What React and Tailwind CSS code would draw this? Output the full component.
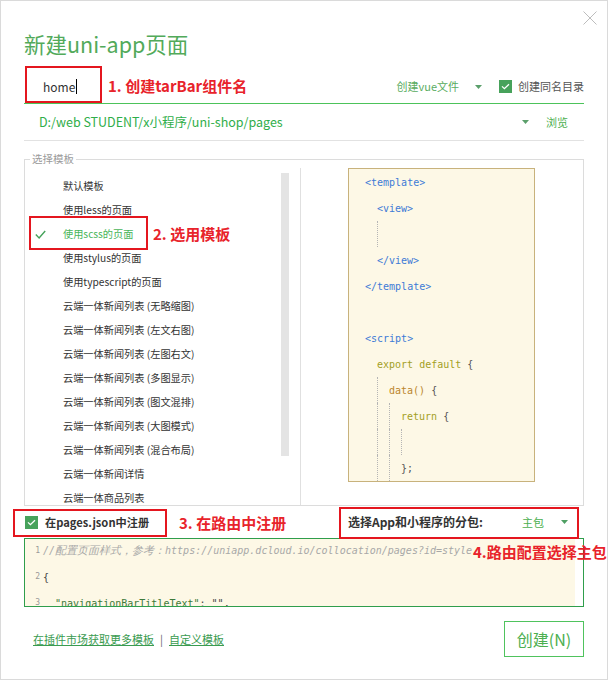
import React from "react";

const Arrow = ({ className = "" }) => (
  <svg width="7" height="4" viewBox="0 0 7 4" className={className}>
    <path d="M0 0h7L3.5 4z" fill="currentColor" />
  </svg>
);

const CheckBox = () => (
  <span className="flex h-[13px] w-[13px] items-center justify-center bg-[#47a25b]">
    <svg width="9" height="7" viewBox="0 0 9 7">
      <path d="M1 3.4l2.4 2.3L8 1.2" stroke="white" strokeWidth="1.3" fill="none" />
    </svg>
  </span>
);

const items = [
  "默认模板",
  "使用less的页面",
  "使用scss的页面",
  "使用stylus的页面",
  "使用typescript的页面",
  "云端一体新闻列表 (无略缩图)",
  "云端一体新闻列表 (左文右图)",
  "云端一体新闻列表 (左图右文)",
  "云端一体新闻列表 (多图显示)",
  "云端一体新闻列表 (图文混排)",
  "云端一体新闻列表 (大图模式)",
  "云端一体新闻列表 (混合布局)",
  "云端一体新闻详情",
  "云端一体商品列表",
];

const T = "text-[#3d7bd6]";
const O = "text-[#a39f1f]";
const B = "text-[#bb862c]";
const D = "text-[#555]";
const codeLines = [
  { cells: [], parts: [["<template>", T]] },
  { cells: [false], parts: [["<view>", T]] },
  { cells: [false, true], parts: [] },
  { cells: [false], parts: [["</view>", T]] },
  { cells: [], parts: [["</template>", T]] },
  { cells: [], parts: [] },
  { cells: [], parts: [["<script>", T]] },
  { cells: [false], parts: [["export default ", O], ["{", D]] },
  { cells: [false, true], parts: [["data() ", B], ["{", D]] },
  { cells: [false, true, true], parts: [["return ", O], ["{", D]] },
  { cells: [false, true, true, true], parts: [] },
  { cells: [false, true, true], parts: [["};", D]] },
  { cells: [false, true, true], parts: [] },
];

export default function App() {
  return (
    <div className="relative h-[680px] w-[608px] overflow-hidden border border-[#dadada] bg-white px-[23px] font-['Noto_Sans_CJK_SC',sans-serif]">
      {/* close */}
      <svg className="absolute right-[10px] top-[10px]" width="14" height="14" viewBox="0 0 14 14">
        <path d="M0.5 0.5L13.5 13.5M13.5 0.5L0.5 13.5" stroke="#bdbdbd" strokeWidth="1" />
      </svg>

      {/* title */}
      <div className="pt-[28px] text-[21.5px] leading-[30px] text-[#52aa5a]">新建uni-app页面</div>

      {/* name row */}
      <div className="mt-[11px] flex h-[34px] items-center border-b border-[#4cc35a]">
        <span className="pl-[19px] text-[12px] text-[#333]">home</span>
        <span className="ml-[1px] h-[15px] w-[1px] bg-black" />
        <div className="ml-auto flex items-center">
          <span className="text-[11px] text-[#5aac5f]">创建vue文件</span>
          <Arrow className="ml-[16px] text-[#5b9f6b]" />
          <span className="ml-[17px]">
            <CheckBox />
          </span>
          <span className="ml-[6px] text-[11px] text-[#555]">创建同名目录</span>
        </div>
      </div>

      {/* path row */}
      <div className="flex h-[37px] items-center border-b border-[#e2e2e2]">
        <span className="pl-[15px] text-[12.5px] text-[#2fae4a]">D:/web STUDENT/x小程序/uni-shop/pages</span>
        <Arrow className="ml-auto text-[#5b9f6b]" />
        <span className="ml-[17px] mr-[16px] text-[11px] text-[#4caf50]">浏览</span>
      </div>

      {/* template fieldset */}
      <fieldset className="mt-[12px] border border-[#dcdcdc]">
        <legend className="ml-[5px] px-[2px] text-[10.5px] leading-[12px] text-[#9a9a9a]">选择模板</legend>
        <div className="flex h-[340px]">
          <div className="flex w-[275px]">
            <div className="flex-1 overflow-hidden pt-[9px]">
              {items.map((t, i) => (
                <div key={i} className="flex h-[24px] items-center">
                  <span className="flex w-[38px] pl-[10px]">
                    {i === 2 && (
                      <svg width="11" height="9" viewBox="0 0 11 9">
                        <path d="M0.8 4.6l3.3 3.3L10.2 1" stroke="#45a25a" strokeWidth="1.4" fill="none" />
                      </svg>
                    )}
                  </span>
                  <span className={`whitespace-nowrap text-[10.2px] ${i === 2 ? "text-[#49b55a]" : "text-[#333]"}`}>{t}</span>
                </div>
              ))}
            </div>
            <div className="mt-[8px] h-[283px] w-[8px] bg-[#e4e4e4]" />
            <div className="w-[11px]" />
          </div>
          <div className="mt-[3px] flex-1 border-l border-[#e0e0e0]">
            <div className="ml-[47px] h-[314px] w-[187px] overflow-hidden border border-[#c8b27c] bg-[#fdf8e6] pl-[16px] font-['DejaVu_Sans_Mono',monospace] text-[10px]">
              {codeLines.map((l, i) => (
                <div key={i} className="flex h-[26px] items-center whitespace-pre">
                  {l.cells.map((g, j) => (
                    <span key={j} className={`h-[26px] w-[12px] shrink-0 ${g ? "border-l border-dotted border-[#b5b5b5]" : ""}`} />
                  ))}
                  {l.parts.map(([s, c], k) => (
                    <span key={k} className={c}>{s}</span>
                  ))}
                </div>
              ))}
            </div>
          </div>
        </div>
      </fieldset>

      {/* register row */}
      <div className="flex h-[32px] items-center">
        <span className="ml-[1px]">
          <CheckBox />
        </span>
        <span className="ml-[7px] text-[11.2px] font-semibold text-[#333]">在pages.json中注册</span>
        <span className="ml-auto text-[12px] font-semibold text-[#333]">选择App和小程序的分包:</span>
        <span className="ml-[39px] text-[11px] text-[#4caf50]">主包</span>
        <Arrow className="ml-[17px] mr-[16px] text-[#4f9f63]" />
      </div>

      {/* pages.json code */}
      <div className="flex h-[69px] overflow-hidden border border-[#2f9e4c]">
        <div className="flex-1 bg-[#fdf8e6] font-['DejaVu_Sans_Mono',monospace] text-[10px]">
          <div className="-mt-[1px]">
            <div className="flex h-[26px] items-center whitespace-pre">
              <span className="w-[18px] pr-[3px] text-right text-[8px] text-[#999]">1</span>
              <span className="italic text-[#a8a8a8]">
                //<span className="text-[11px]">配置页面样式，参考：</span>https://uniapp.dcloud.io/collocation/pages?id=style
              </span>
            </div>
            <div className="flex h-[26px] items-center whitespace-pre">
              <span className="w-[18px] pr-[3px] text-right text-[8px] text-[#999]">2</span>
              <span className="text-[#444]">{"{"}</span>
            </div>
            <div className="flex h-[26px] items-center whitespace-pre">
              <span className="w-[18px] pr-[3px] text-right text-[8px] text-[#999]">3</span>
              <span className="text-[#3d7a3a]">{'  "navigationBarTitleText"'}</span>
              <span className="text-[#444]">{': "",'}</span>
            </div>
          </div>
        </div>
        <div className="w-[8px] bg-white" />
      </div>

      {/* footer */}
      <div className="mt-[14px] flex h-[36px] items-center">
        <span className="pl-[9px] text-[11px] text-[#3a9b50] underline">在插件市场获取更多模板</span>
        <span className="mx-[6px] text-[11px] text-[#666]">|</span>
        <span className="text-[11px] text-[#3a9b50] underline">自定义模板</span>
        <div className="ml-auto flex h-[36px] w-[80px] items-center justify-center border border-[#4fc35d] text-[16px] text-[#4caf50]">
          创建(N)
        </div>
      </div>

      {/* annotations */}
      <div className="absolute left-[24px] top-[65px] h-[37px] w-[77px] border-2 border-[#e4161f]" />
      <div className="absolute left-[107px] top-[75px] text-[15px] font-bold leading-[20px] text-[#e8232b]">1. 创建tarBar组件名</div>

      <div className="absolute left-[28px] top-[215px] h-[34px] w-[119px] border-2 border-[#e4161f]" />
      <div className="absolute left-[152px] top-[223px] text-[15px] font-bold leading-[20px] text-[#e8232b]">2. 选用模板</div>

      <div className="absolute left-[12px] top-[508px] h-[28px] w-[154px] border-2 border-[#e4161f]" />
      <div className="absolute left-[178px] top-[512px] text-[15px] font-bold leading-[20px] text-[#e8232b]">3. 在路由中注册</div>

      <div className="absolute left-[338px] top-[506px] h-[32px] w-[240px] border-2 border-[#e4161f]" />
      <div className="absolute left-[472px] top-[541px] text-[15px] font-bold leading-[20px] text-[#e8232b]">4.路由配置选择主包</div>
    </div>
  );
}
